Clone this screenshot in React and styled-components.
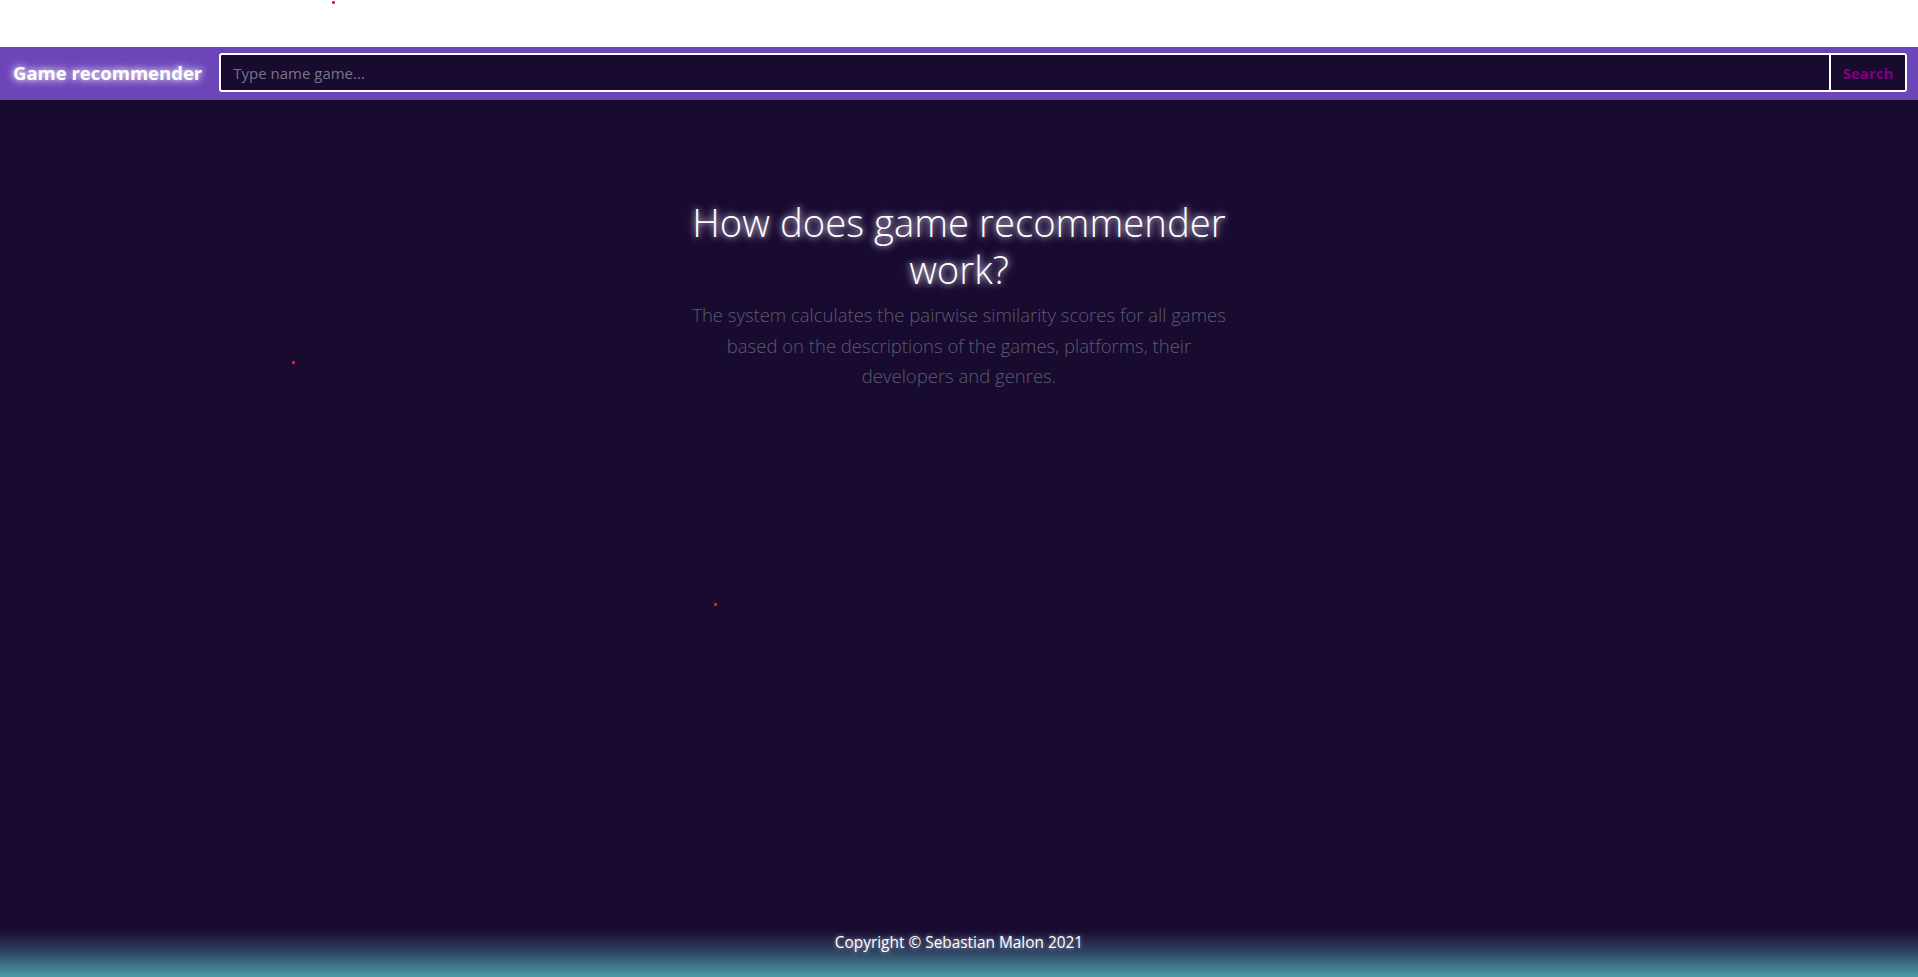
import React from "react";
import styled, { createGlobalStyle } from "styled-components";

const GlobalStyle = createGlobalStyle`
  html, body {
    margin: 0;
    padding: 0;
    background: #fff;
    font-family: "Open Sans", "Noto Sans", sans-serif;
  }
  * { box-sizing: border-box; }
`;

const dots = [
  { x: 332, y: 1 },
  { x: 292, y: 361 },
  { x: 714, y: 603 },
];

const App = () => {
  return (
    <Page>
      <GlobalStyle />
      <TopGap />
      <Nav>
        <Brand>Game recommender</Brand>
        <SearchForm onSubmit={(e) => e.preventDefault()}>
          <SearchInput placeholder="Type name game..." />
          <SearchButton type="submit">Search</SearchButton>
        </SearchForm>
      </Nav>
      <Main>
        <Intro>
          <Heading>How does game recommender work?</Heading>
          <Lead>
            The system calculates the pairwise similarity scores for all games
            based on the descriptions of the games, platforms, their developers
            and genres.
          </Lead>
        </Intro>
      </Main>
      <Footer>Copyright © Sebastian Malon 2021</Footer>
      {dots.map((d, i) => (
        <Dot key={i} style={{ left: d.x, top: d.y }} />
      ))}
    </Page>
  );
};

export default App;

const Page = styled.div`
  position: relative;
  display: flex;
  flex-direction: column;
  min-height: 100vh;
`;

const TopGap = styled.div`
  height: 47px;
  background: #fff;
`;

const Nav = styled.nav`
  display: flex;
  align-items: center;
  gap: 17px;
  height: 53px;
  padding: 0 11px 2px 13px;
  background: #6c45b9;
`;

const Brand = styled.span`
  font-size: 18.5px;
  font-weight: 700;
  color: #fff;
  white-space: nowrap;
  text-shadow: 0 0 6px rgba(255, 255, 255, 0.9), 0 0 12px rgba(220, 200, 255, 0.8);
`;

const SearchForm = styled.form`
  display: flex;
  flex: 1;
  height: 39px;
`;

const SearchInput = styled.input`
  flex: 1;
  height: 100%;
  padding: 0 12px;
  border: 2px solid #fff;
  border-radius: 3px 0 0 3px;
  background: #190a30;
  color: #fff;
  font-family: "Open Sans", "Noto Sans", sans-serif;
  font-size: 15px;
  outline: none;
  &::placeholder {
    color: #767688;
  }
`;

const SearchButton = styled.button`
  width: 76px;
  height: 100%;
  border: 2px solid #fff;
  border-left: none;
  border-radius: 0 3px 3px 0;
  background: #190a30;
  color: #800080;
  font-family: "Open Sans", "Noto Sans", sans-serif;
  font-size: 15px;
  font-weight: 700;
  cursor: pointer;
`;

const Main = styled.main`
  flex: 1;
  display: flex;
  justify-content: center;
  padding-top: 99px;
  background: #190a30;
`;

const Intro = styled.section`
  width: 560px;
  text-align: center;
`;

const Heading = styled.h1`
  margin: 0;
  font-size: 38.3px;
  font-weight: 300;
  line-height: 47px;
  color: #fff;
  text-shadow: 0 0 6px rgba(255, 255, 255, 0.8), 0 0 12px rgba(210, 190, 255, 0.6);
`;

const Lead = styled.p`
  margin: 7px 0 0;
  font-size: 18.5px;
  font-weight: 300;
  line-height: 30.5px;
  color: #595c70;
`;

const Footer = styled.footer`
  height: 47px;
  padding-top: 2px;
  text-align: center;
  font-size: 15.4px;
  color: #fff;
  background: linear-gradient(to bottom, #190a30 0%, #2c3a5c 40%, #4a9ba6 100%);
  text-shadow: 0 0 4px rgba(255, 255, 255, 0.6);
`;

const Dot = styled.span`
  position: absolute;
  width: 3px;
  height: 3px;
  background: #e8202a;
  border-radius: 1px;
`;
